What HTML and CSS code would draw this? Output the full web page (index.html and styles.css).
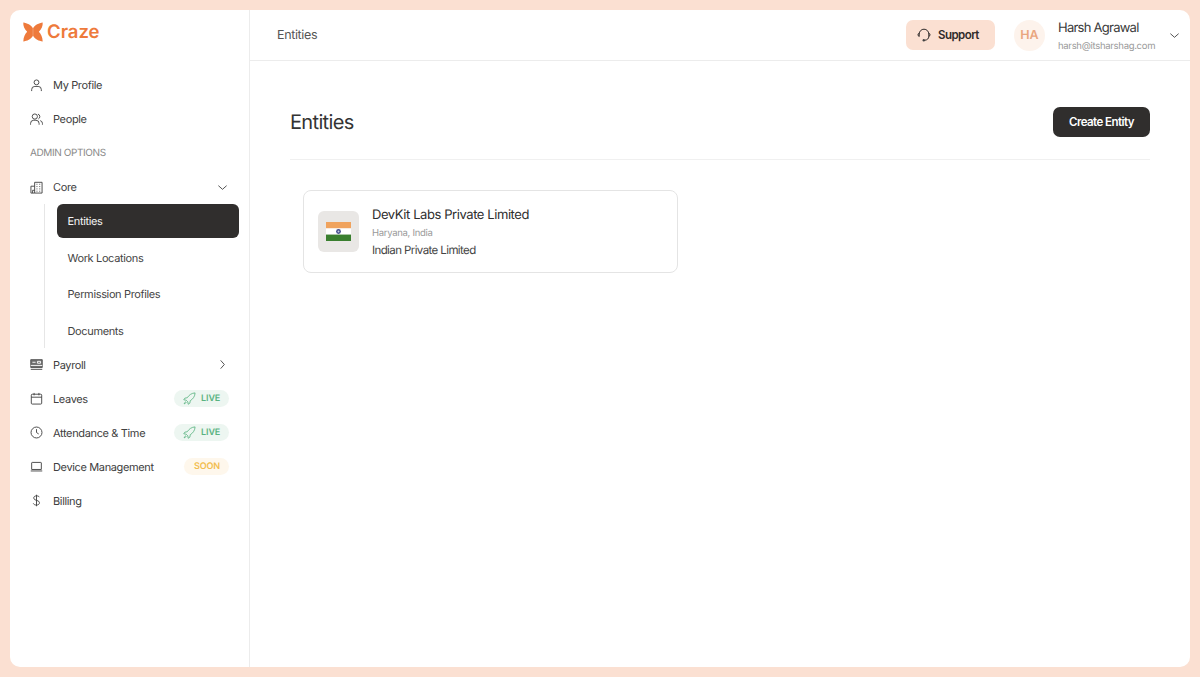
FILE: index.html
```html
<!DOCTYPE html>
<html lang="en">
<head>
<meta charset="utf-8">
<title>Craze - Entities</title>
<link rel="stylesheet" href="styles.css">
</head>
<body>
<div class="app">
  <aside class="sidebar">
    <div class="logo">
      <svg class="logo-mark" viewBox="0 0 20 20" width="20" height="20"><path fill="#ee7a3b" d="M.3.6C4 1.4 8 2.5 10 6.5 12 2.5 16 1.4 19.7.6 20 4 18.5 7.4 15.8 9.8 18 12 19.5 15 19.7 19.4 16 19 12 17.5 10 13.5 8 17.5 4 19 .3 19.4.5 15 2 12 4.2 9.8 1.5 7.4 0 4 .3.6Z"/><path fill="#fff" opacity=".5" d="M9.75 6.5h.5v7h-.5z"/></svg>
      <span class="logo-text">Craze</span>
    </div>
    <nav class="nav">
      <a class="nav-row"><svg class="ico" viewBox="0 0 14 14"><circle cx="7" cy="3.6" r="2.6"/><path d="M1.8 13v-1.6a3.4 3.4 0 0 1 3.4-3.4h3.6a3.4 3.4 0 0 1 3.4 3.4V13"/></svg><span class="label">My Profile</span></a>
      <a class="nav-row"><svg class="ico" viewBox="0 0 14 14"><circle cx="5.2" cy="3.8" r="2.8"/><path d="M.6 12.6v-1.4a3.4 3.4 0 0 1 3.4-3.4h2.4a3.4 3.4 0 0 1 3.4 3.4v1.4M8.6 1.2a2.8 2.8 0 0 1 .4 5.2M11 8.2a3.2 3.2 0 0 1 2.4 3v1.4"/></svg><span class="label">People</span></a>
      <div class="nav-heading">ADMIN OPTIONS</div>
      <a class="nav-row"><svg class="ico" viewBox="0 0 14 14"><path d="M5 13V1.4h8V13zM5 5.6H1V13h4M2.8 13v-3h2.2M7 3.5h1M10 3.5h1M7 6h1M10 6h1M7 8.5h1M10 8.5h1M7 11h1M10 11h1"/></svg><span class="label">Core</span><svg class="chev" viewBox="0 0 12 12"><path d="M1.5 4l4.5 4 4.5-4"/></svg></a>
      <div class="subnav">
        <a class="sub-row is-active"><span class="label">Entities</span></a>
        <a class="sub-row"><span class="label">Work Locations</span></a>
        <a class="sub-row"><span class="label">Permission Profiles</span></a>
        <a class="sub-row"><span class="label">Documents</span></a>
      </div>
      <a class="nav-row"><svg class="ico" viewBox="0 0 14 14"><path class="grey" d="M.8 1.8h12.4v8.4H.8z"/><path class="cut" d="M2.6 4.6h3.4M8 3.6h3.4v2H8zM.8 8h12.4"/><path d="M.8 12.2h12.4"/></svg><span class="label">Payroll</span><svg class="chev" viewBox="0 0 12 12"><path d="M4 1.5l4 4.5-4 4.5"/></svg></a>
      <a class="nav-row"><svg class="ico" viewBox="0 0 14 14"><path d="M2.4 2.4h9.2a1 1 0 0 1 1 1v8.6a1 1 0 0 1-1 1H2.4a1 1 0 0 1-1-1V3.4a1 1 0 0 1 1-1zM1.4 5.6h11.2M4.4 1v2.6M9.6 1v2.6"/></svg><span class="label">Leaves</span>
        <span class="badge badge-live"><svg class="rocket" viewBox="0 0 14 14"><path d="M13 1C9.4 1.2 6.6 3 4.6 6.2L2 6.6.8 8.4l2.6.4 1.8 1.8.4 2.6 1.8-1.2.4-2.6C11 7.4 12.8 4.6 13 1zM3 10.4c-.8.4-1.4 1.2-1.8 2.4 1.2-.4 2-1 2.4-1.8"/></svg>LIVE</span></a>
      <a class="nav-row"><svg class="ico" viewBox="0 0 14 14"><circle cx="7" cy="7" r="5.9"/><path d="M7 3.4V7l2.4 1.6"/></svg><span class="label">Attendance &amp; Time</span>
        <span class="badge badge-live"><svg class="rocket" viewBox="0 0 14 14"><path d="M13 1C9.4 1.2 6.6 3 4.6 6.2L2 6.6.8 8.4l2.6.4 1.8 1.8.4 2.6 1.8-1.2.4-2.6C11 7.4 12.8 4.6 13 1zM3 10.4c-.8.4-1.4 1.2-1.8 2.4 1.2-.4 2-1 2.4-1.8"/></svg>LIVE</span></a>
      <a class="nav-row"><svg class="ico" viewBox="0 0 14 14"><path d="M2.4 2.6h9.2a.6.6 0 0 1 .6.6v7H1.8v-7a.6.6 0 0 1 .6-.6zM.8 11.8h12.4"/></svg><span class="label">Device Management</span><span class="badge badge-soon">SOON</span></a>
      <a class="nav-row"><svg class="ico" viewBox="0 0 14 14"><path d="M7 .8v12.4M10 3.4C9.6 2.4 8.4 2 7 2 5.2 2 4 2.9 4 4.4c0 3.2 6.2 1.7 6.2 5 0 1.6-1.4 2.5-3.2 2.5-1.6 0-3-.6-3.4-1.8"/></svg><span class="label">Billing</span></a>
    </nav>
  </aside>
  <div class="main">
    <header class="topbar">
      <span class="crumb">Entities</span>
      <button class="support"><svg class="support-ico" viewBox="0 0 14 14"><path d="M2.2 8.6V6a4.8 4.8 0 0 1 9.6 0v2.6M11.8 5.2c.8.2 1.2.8 1.2 1.6s-.4 1.4-1.2 1.6M2.2 5.2C1.4 5.4 1 6 1 6.8s.4 1.4 1.2 1.6M11.8 8.4c0 2.2-1.6 3.6-3.8 3.8"/><circle class="solid" cx="6.8" cy="12.2" r="1.2"/></svg>Support</button>
      <div class="user">
        <div class="avatar">HA</div>
        <div class="user-text">
          <div class="user-name">Harsh Agrawal</div>
          <div class="user-mail">harsh@itsharshag.com</div>
        </div>
        <svg class="chev" viewBox="0 0 12 12"><path d="M1.5 4l4.5 4 4.5-4"/></svg>
      </div>
    </header>
    <main class="content">
      <div class="page-head">
        <h1>Entities</h1>
        <button class="primary">Create Entity</button>
      </div>
      <section class="cards">
        <article class="card">
          <div class="flag-box">
            <svg class="flag" viewBox="0 0 25 19" width="25" height="19"><rect width="25" height="6.4" fill="#f0a35e"/><rect y="6.4" width="25" height="6.2" fill="#fff"/><rect y="12.6" width="25" height="6.4" fill="#3a7f2f"/><circle cx="12.5" cy="9.5" r="2.4" fill="#3f4a8c"/><circle cx="12.5" cy="9.5" r="1" fill="#c9cbe0"/></svg>
          </div>
          <div class="card-text">
            <div class="card-title">DevKit Labs Private Limited</div>
            <div class="card-loc">Haryana, India</div>
            <div class="card-type">Indian Private Limited</div>
          </div>
        </article>
      </section>
    </main>
  </div>
</div>
</body>
</html>
```
FILE: styles.css
```css
* { box-sizing: border-box; }
html, body { height: 100%; }
body {
  margin: 0;
  padding: 10px;
  background: #fbe0d2;
  font-family: Inter, "Noto Sans", sans-serif;
  color: #3a3a3a;
  overflow: hidden;
  text-rendering: geometricPrecision;
}
.app {
  display: flex;
  height: 657px;
  background: #fff;
  border-radius: 10px;
  overflow: hidden;
}
.sidebar {
  width: 240px;
  flex: none;
  border-right: 1px solid #ececec;
  padding: 9px 10px 0 13px;
}
.logo {
  display: flex;
  align-items: center;
  gap: 4px;
  height: 26px;
  margin-bottom: 23px;
}
.logo-mark { flex: none; }
.logo-text {
  font-size: 18.5px;
  font-weight: 600;
  color: #ee7a3b;
  line-height: 1;
  padding-top: 1px;
}
.nav { display: flex; flex-direction: column; margin-left: 7px; }
.nav-row {
  display: flex;
  align-items: center;
  height: 34px;
  font-size: 11px;
  color: #404040;
}
.label {
  letter-spacing: -.36px;
}
.ico {
  width: 13px;
  height: 13px;
  flex: none;
  margin-right: 10px;
  fill: none;
  stroke: #444;
  stroke-width: 1;
}
.solid { fill: #444; stroke: none; }
.grey { fill: #6f6f6f; stroke: #555; }
.cut { stroke: #fff; }
.chev {
  width: 11px;
  height: 11px;
  margin-left: auto;
  margin-right: 11px;
  fill: none;
  stroke: #444;
  stroke-width: 1;
  flex: none;
}
.nav-heading {
  height: 34px;
  display: flex;
  align-items: center;
  font-size: 10px;
  letter-spacing: -.4px;
  color: #8a8a8a;
}
.subnav {
  display: flex;
  flex-direction: column;
  gap: 2.6px;
  margin-left: 14px;
  padding-left: 12px;
  border-left: 1px solid #e6e6e6;
}
.sub-row {
  height: 34px;
  width: 182px;
  display: flex;
  align-items: center;
  padding-left: 10.5px;
  font-size: 11px;
  color: #444;
  border-radius: 6px;
}
.is-active { background: #302e2d; color: #f4f4f4; }
.badge {
  margin-left: auto;
  margin-right: 10px;
  height: 17px;
  border-radius: 9px;
  display: flex;
  align-items: center;
  font-size: 9px;
  font-weight: 600;
  letter-spacing: -.1px;
}
.badge-live { background: #edf6f1; color: #5ab381; width: 55px; padding-left: 9px; gap: 5px; }
.badge-soon { background: #fef7ec; color: #f2bd4f; width: 45px; justify-content: center; padding-left: 1px; }
.rocket { width: 13px; height: 13px; fill: none; stroke: #5ab381; stroke-width: .9; flex: none; }
.main { flex: 1; display: flex; flex-direction: column; min-width: 0; }
.topbar {
  height: 51px;
  flex: none;
  display: flex;
  align-items: center;
  padding-left: 27px;
  border-bottom: 1px solid #ececec;
}
.crumb { font-size: 12.5px; letter-spacing: -.35px; color: #555; margin-right: auto; padding-top: 1px; }
.support {
  width: 89px;
  height: 30px;
  margin-right: 19px;
  border: 0;
  border-radius: 7px;
  background: #fbe0d2;
  display: flex;
  align-items: center;
  padding-left: 11px;
  gap: 7px;
  font: 600 11.5px Inter, sans-serif;
  letter-spacing: -.55px;
  color: #2f2b2a;
}
.support-ico { width: 14px; height: 14px; fill: none; stroke: #2f2b2a; stroke-width: 1; flex: none; }
.user { display: flex; align-items: center; }
.avatar {
  width: 31px;
  height: 31px;
  border-radius: 50%;
  background: #fdf3ec;
  color: #e9a67f;
  font-size: 12.5px;
  font-weight: 600;
  display: flex;
  align-items: center;
  justify-content: center;
  margin-right: 13px;
}
.user-text { width: 111px; padding-top: 2px; }
.user-name { font-size: 13px; letter-spacing: -.75px; color: #3a3a3a; line-height: 16px; }
.user-mail { font-size: 9.5px; letter-spacing: -.3px; color: #9a9a9a; line-height: 12px; margin-top: 5px; }
.user .chev { margin: 0 10px 0 0; }
.content { padding: 46px 40px 0; }
.page-head {
  display: flex;
  align-items: center;
  justify-content: space-between;
  height: 53px;
  padding-bottom: 23px;
  border-bottom: 1px solid #f0f0f0;
}
h1 { margin: 0; font-size: 20px; font-weight: 400; letter-spacing: -.65px; color: #333; }
.primary {
  width: 97px;
  height: 30px;
  border: 0;
  border-radius: 7px;
  background: #302e2d;
  color: #fff;
  font: 600 11.5px Inter, sans-serif;
  letter-spacing: -.55px;
}
.cards { padding: 30px 0 0 13px; }
.card {
  width: 375px;
  height: 83px;
  display: flex;
  align-items: center;
  gap: 13px;
  padding-left: 14px;
  border: 1px solid #e4e4e4;
  border-radius: 8px;
}
.flag-box {
  width: 41px;
  height: 41px;
  border-radius: 6px;
  background: #e9e7e5;
  display: flex;
  align-items: center;
  justify-content: center;
  flex: none;
}
.card-title { font-size: 13px; font-weight: 400; letter-spacing: -.42px; color: #2e2e2e; line-height: 16px; }
.card-loc { font-size: 9.5px; letter-spacing: -.3px; color: #9a9a9a; line-height: 12px; margin-top: 5px; }
.card-type { font-size: 11.5px; letter-spacing: -.6px; color: #444; line-height: 14px; margin-top: 3px; }
```
